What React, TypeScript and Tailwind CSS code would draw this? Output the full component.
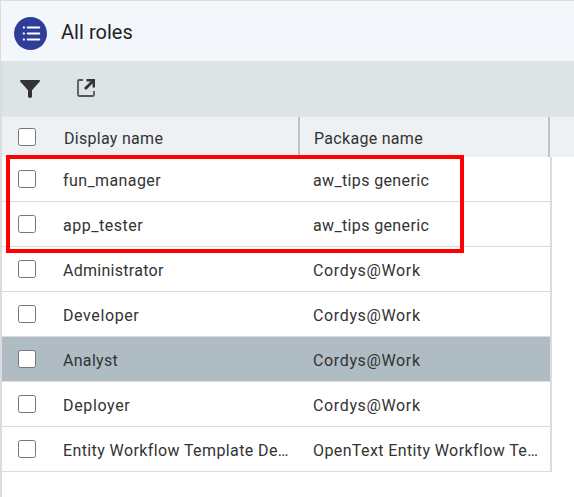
const rows = [
  { name: 'fun_manager', pkg: 'aw_tips generic', nameTracking: 'tracking-[0.4px]', pkgTracking: 'tracking-[0.36px]' },
  { name: 'app_tester', pkg: 'aw_tips generic', nameTracking: 'tracking-[0.52px]', pkgTracking: 'tracking-[0.36px]' },
  { name: 'Administrator', pkg: 'Cordys@Work', nameTracking: 'tracking-[0.28px]', pkgTracking: 'tracking-[0.64px]' },
  { name: 'Developer', pkg: 'Cordys@Work', nameTracking: 'tracking-[0.6px]', pkgTracking: 'tracking-[0.64px]' },
  { name: 'Analyst', pkg: 'Cordys@Work', nameTracking: 'tracking-[0.3px]', pkgTracking: 'tracking-[0.64px]', selected: true },
  { name: 'Deployer', pkg: 'Cordys@Work', nameTracking: 'tracking-[0.64px]', pkgTracking: 'tracking-[0.64px]' },
  { name: 'Entity Workflow Template De…', pkg: 'OpenText Entity Workflow Te…', nameTracking: 'tracking-[0.39px]', pkgTracking: 'tracking-[0.39px]' },
];

function Checkbox() {
  return (
    <input
      type="checkbox"
      className="block size-[18px] shrink-0 appearance-none rounded-[2.5px] border border-[#767676] bg-white"
    />
  );
}

function ListIcon() {
  return (
    <svg width="33" height="33" viewBox="0 0 33 33" className="block">
      <circle cx="16.5" cy="16.5" r="16.5" fill="#2e3d98" />
      <g fill="#fff">
        <rect x="8.8" y="9.5" width="2.1" height="2" rx="0.4" />
        <rect x="12.8" y="9.5" width="13.4" height="2" rx="0.8" />
        <rect x="8.8" y="15.5" width="2.1" height="2" rx="0.4" />
        <rect x="12.8" y="15.5" width="13.4" height="2" rx="0.8" />
        <rect x="8.8" y="21.5" width="2.1" height="2" rx="0.4" />
        <rect x="12.8" y="21.5" width="13.4" height="2" rx="0.8" />
      </g>
    </svg>
  );
}

function FilterIcon() {
  return (
    <svg width="20" height="18" viewBox="0 0 20 18" className="block">
      <path d="M.9 0h18.2c.8 0 1.1.9.7 1.6L12 10.3v6c0 .9-.8 1.7-2 1.7s-2-.8-2-1.7v-6L.2 1.6C-.2.9.1 0 .9 0z" fill="#333" />
    </svg>
  );
}

function OpenIcon() {
  return (
    <svg width="18" height="18" viewBox="0 0 18 18" className="block" fill="none">
      <path d="M6 1H2.200Q1 1 1 2.200v13.600Q1 17 2.200 17h13.600Q17 17 17 15.800V12" stroke="#555" strokeWidth="1.8" />
      <path d="M8 10l8-8" stroke="#333" strokeWidth="2.8" />
      <path d="M9.500 1.200h7.300v7.300" stroke="#333" strokeWidth="2.400" />
    </svg>
  );
}

export default function App() {
  return (
    <div className="relative flex h-[497px] w-[574px] flex-col overflow-hidden border-t border-[#dcdcdc] bg-white font-['Roboto',sans-serif] text-[#333]">
      <header className="flex h-[60px] shrink-0 items-center gap-3.5 border-l border-[#dcdcdc] bg-[#f3f6fb] pl-[13px]">
        <div className="mt-[5px]">
          <ListIcon />
        </div>
        <h1 className="mt-0.5 text-xl leading-6 tracking-[0.04px] text-[#222]">All roles</h1>
      </header>
      <main className="flex grow flex-col border-l-2 border-[#dcdcdc]">
        <div className="flex h-14 shrink-0 items-start gap-[37px] border-b border-[#e4e8e9] bg-[#dce4e6] pl-[18px]">
          <button className="mt-[19px]">
            <FilterIcon />
          </button>
          <button className="mt-[18px]">
            <OpenIcon />
          </button>
        </div>
        <div className="flex h-10 shrink-0 bg-[#edf1f4] text-base leading-5">
          <div className="flex w-[298px] items-center border-r-2 border-[#bfc3c5] pl-4">
            <Checkbox />
            <span className="mt-1 pl-7 tracking-[0.29px]">Display name</span>
          </div>
          <div className="flex w-[250px] items-center border-r-2 border-[#bfc3c5] pl-[14px]">
            <span className="mt-1 tracking-[0.3px]">Package name</span>
          </div>
        </div>
        <div className="w-[550px] border-r-2 border-[#dcdcdc] text-base leading-5">
          {rows.map((r) => (
            <div
              key={r.name}
              className={`flex h-[45px] items-center border-b border-[#dcdcdc] ${r.selected ? 'bg-[#b0bcc4]' : ''}`}
            >
              <div className="flex w-[298px] items-center pl-4">
                <Checkbox />
                <span className={`mt-[3px] pl-[27px] whitespace-nowrap ${r.nameTracking}`}>{r.name}</span>
              </div>
              <span className={`mt-[3px] pl-[13px] whitespace-nowrap ${r.pkgTracking}`}>{r.pkg}</span>
            </div>
          ))}
        </div>
      </main>
      <div className="pointer-events-none absolute top-[154px] left-[6px] h-[98px] w-[458px] border-4 border-[#f00]" />
    </div>
  );
}
